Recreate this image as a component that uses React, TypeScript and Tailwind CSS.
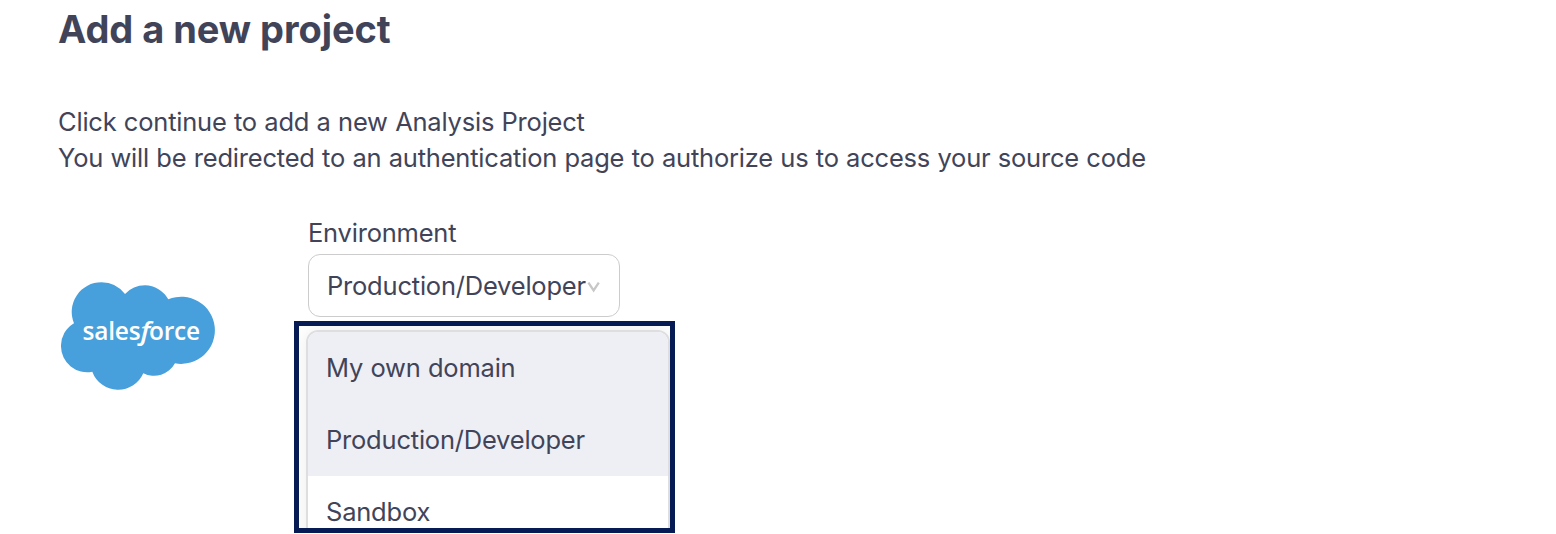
const options = [
  { label: "My own domain", active: true },
  { label: "Production/Developer", active: true },
  { label: "Sandbox", active: false },
];

function SalesforceLogo() {
  return (
    <svg className="block h-[108px] w-[154px]" viewBox="0 0 154 108" role="img" aria-label="Salesforce">
      <path
        fill="#479fdb"
        d="M13 41.3A29.7 29.7 0 0 1 40.5 .2A29.7 29.7 0 0 1 64 12A27.5 27.5 0 0 1 84 3.3A27.5 27.5 0 0 1 107.3 17.3A33.6 33.6 0 1 1 114 81.3A24 24 0 0 1 82.3 91.3A27.5 27.5 0 0 1 31.3 89.7A26 26 0 0 1 0 64.5A26 26 0 0 1 13 41.3Z"
      />
      <g fill="#fff" fontSize="26" fontFamily="'Open Sans', 'Noto Sans', sans-serif">
        <text x="21.5" y="57.6" className="font-[550]" textLength="58" lengthAdjust="spacingAndGlyphs">
          sales
        </text>
        <text x="79.5" y="57.6" className="font-semibold italic" textLength="9.5" lengthAdjust="spacingAndGlyphs">
          f
        </text>
        <text x="88" y="57.6" className="font-[550]" textLength="51" lengthAdjust="spacingAndGlyphs">
          orce
        </text>
      </g>
    </svg>
  );
}

function EnvironmentSelect() {
  return (
    <div className="relative w-[312px]">
      <label className="block h-9 leading-9">Environment</label>
      <button className="mt-[3px] flex h-[63px] w-full items-center rounded-[12px] border border-[#cccccc] bg-white pl-[18px] text-left">
        <span className="w-[260px] whitespace-nowrap">Production/Developer</span>
        <svg className="mt-0.5 h-3 w-[13px] shrink-0" viewBox="0 0 13 12" fill="none" stroke="#c7c7c7" strokeWidth="2.3">
          <path d="M1.4 1.6 6.6 9.4 11.8 1.6" />
        </svg>
      </button>
      <div className="absolute -left-[14px] top-[106px] h-[212px] w-[381px] overflow-hidden border-[5px] border-[#061b54] bg-white pl-[7px] pt-1">
        <ul className="h-[260px] w-[364px] overflow-hidden rounded-[12px] border-2 border-[#dedee0] shadow-[0_0_18px_rgba(0,0,0,0.08)]">
          {options.map((option) => (
            <li
              key={option.label}
              className={`flex h-[72px] items-center pl-[18px] ${option.active ? "bg-[#eeeff5]" : "bg-white"}`}
            >
              {option.label}
            </li>
          ))}
        </ul>
      </div>
    </div>
  );
}

export default function App() {
  return (
    <main className="h-[534px] overflow-hidden bg-white pl-[58px] font-['Inter',sans-serif] text-[25.5px] leading-9 tracking-[-0.21px] [word-spacing:0.4px] text-[#414459]">
      <h1 className="pt-1 text-[38px] font-bold leading-[50px] tracking-[-0.05px] [word-spacing:0px]">Add a new project</h1>
      <p className="mt-[50px]">
        Click continue to add a new Analysis Project
        <br />
        You will be redirected to an authentication page to authorize us to access your source code
      </p>
      <div className="mt-[39px] flex">
        <div className="w-[250px] pl-[3px] pt-[67px]">
          <SalesforceLogo />
        </div>
        <EnvironmentSelect />
      </div>
    </main>
  );
}
